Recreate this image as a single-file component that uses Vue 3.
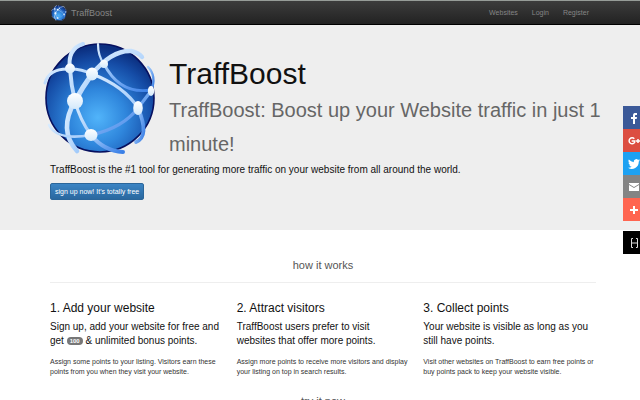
<template>
  <div class="page">
    <nav class="navbar">
      <a class="brand" href="#">
        <svg class="brand-logo" viewBox="8 10 114 116" aria-hidden="true">
          <use href="#globe" />
        </svg>
        TraffBoost
      </a>
      <div class="nav-links">
        <a v-for="item in links" :key="item" href="#">{{ item }}</a>
      </div>
    </nav>

    <header class="hero">
      <div class="hero-top">
        <svg class="logo" viewBox="8 10 114 116" role="img" aria-label="TraffBoost logo">
          <defs>
            <radialGradient id="ball" cx="48%" cy="68%" r="65%">
              <stop offset="0" stop-color="#51b4fa" />
              <stop offset="0.4" stop-color="#2f86dc" />
              <stop offset="0.8" stop-color="#154ca6" />
              <stop offset="1" stop-color="#0b2f80" />
            </radialGradient>
            <linearGradient id="lineLight" x1="0" y1="0" x2="1" y2="1">
              <stop offset="0" stop-color="#d9ecff" />
              <stop offset="1" stop-color="#a3cbfa" />
            </linearGradient>
            <linearGradient id="lineBlue" x1="0" y1="0" x2="1" y2="1">
              <stop offset="0" stop-color="#a9d0fc" />
              <stop offset="1" stop-color="#3a7fe6" />
            </linearGradient>
            <linearGradient id="dot" x1="0" y1="0" x2="0" y2="1">
              <stop offset="0" stop-color="#ffffff" />
              <stop offset="1" stop-color="#d3e9fb" />
            </linearGradient>
          </defs>
          <g id="globe">
            <circle cx="64" cy="68" r="54" fill="url(#ball)" stroke="#06105f" stroke-width="1.6" />
            <g fill="none" stroke="url(#lineLight)" stroke-linecap="round">
              <path d="M47 14Q31 19 34 39Q35 55 39 71" stroke-width="4" />
              <path d="M39 71Q22 100 41 121" stroke-width="4.6" />
              <path d="M39 71Q44 90 55 105" stroke-width="3" />
              <path d="M39 71Q46 58 56 44" stroke-width="5" />
              <path d="M9 53Q13 38 34 39Q46 39 56 44" stroke-width="3" />
              <path d="M56 44Q76 20 95 21Q103 23 106 27" stroke-width="4.4" />
              <path d="M62 14Q62 26 68 34" stroke-width="2.2" />
              <path d="M13 95Q21 111 55 105" stroke-width="2.6" />
              <path d="M56 44Q88 56 102 78" stroke-width="3.4" />
            </g>
            <g fill="none" stroke="url(#lineBlue)" stroke-linecap="round">
              <path d="M68 34Q84 65 115 60" stroke-width="2.8" />
              <path d="M55 105Q87 98 102 78L115 61" stroke-width="3.2" />
              <path d="M115 61Q121 46 112 37" stroke-width="2.4" />
              <path d="M102 78Q114 106 100 112" stroke-width="3.8" />
              <path d="M55 105Q68 121 87 122" stroke-width="4" />
            </g>
            <g fill="url(#dot)">
              <circle cx="39" cy="71" r="8" />
              <ellipse cx="56" cy="44" rx="6" ry="6.4" />
              <circle cx="34" cy="38.5" r="5" />
              <circle cx="68" cy="34" r="4" />
              <ellipse cx="102" cy="78" rx="4.8" ry="7" />
              <ellipse cx="55" cy="105" rx="6.5" ry="6" />
              <ellipse cx="115" cy="61" rx="3.2" ry="5" />
            </g>
          </g>
        </svg>
        <div class="hero-title">
          <h1>TraffBoost</h1>
          <h2>TraffBoost: Boost up your Website traffic in just 1 minute!</h2>
        </div>
      </div>
      <p class="tagline">TraffBoost is the #1 tool for generating more traffic on your website from all around the world.</p>
      <button class="signup" type="button">sign up now! It's totally free</button>
    </header>

    <main class="content">
      <h3 class="section-title">how it works</h3>
      <div class="steps">
        <section v-for="step in steps" :key="step.title">
          <h4>{{ step.title }}</h4>
          <p class="lead">
            {{ step.lead }}
            <template v-if="step.badge"><span class="badge">{{ step.badge }}</span> {{ step.rest }}</template>
          </p>
          <p class="note">{{ step.note }}</p>
        </section>
      </div>
      <h3 class="section-title next">try it now</h3>
    </main>

    <aside class="share">
      <button class="facebook" type="button" aria-label="Facebook">
        <svg viewBox="0 0 12 12"><path d="M5 12V7H3V5h2V3.5C5 1.600 6 1 7.500 1H9v2H8c-.8 0-1 .3-1 1v1h2l-.3 2H7v5z" /></svg>
      </button>
      <button class="google" type="button" aria-label="Google Plus">
        <svg viewBox="0 0 12 12"><path d="M6.300 3.700A3 3 0 1 0 6.500 7.600L6.800 6H3.700M8 6h4M10 4v4" fill="none" stroke="#fff" stroke-width="1.5" /></svg>
      </button>
      <button class="twitter" type="button" aria-label="Twitter">
        <svg viewBox="0 0 24 24"><path d="M24 4.6a10 10 0 0 1-2.8.8 5 5 0 0 0 2.1-2.7 10 10 0 0 1-3.1 1.2 4.9 4.9 0 0 0-8.4 4.5A14 14 0 0 1 1.7 3.2a4.9 4.9 0 0 0 1.5 6.5 5 5 0 0 1-2.2-.6c0 2.3 1.6 4.4 3.9 4.9a5 5 0 0 1-2.2.1 4.9 4.9 0 0 0 4.6 3.4A10 10 0 0 1 0 19.5 14 14 0 0 0 21.5 7.1 10 10 0 0 0 24 4.6z" /></svg>
      </button>
      <button class="mail" type="button" aria-label="Email">
        <svg viewBox="0 0 12 12"><path d="M1 2h10v1L6 6 1 3zM1 4l5 3 5-3v6H1z" /></svg>
      </button>
      <button class="more" type="button" aria-label="More">
        <svg viewBox="0 0 12 12"><path d="M5 2h2v3h3v2H7v3H5V7H2V5h3z" /></svg>
      </button>
      <button class="hide" type="button" aria-label="Hide">
        <svg viewBox="0 0 12 12"><path d="M5 1.5H3.500v9H5M8 1.500h1.500v9H8M4 6h5" fill="none" stroke="#ddd" /></svg>
      </button>
    </aside>
  </div>
</template>

<script setup>
const links = ['Websites', 'Login', 'Register']

const steps = [
  {
    title: '1. Add your website',
    lead: 'Sign up, add your website for free and get',
    badge: 100,
    rest: '& unlimited bonus points.',
    note: 'Assign some points to your listing. Visitors earn these points from you when they visit your website.',
  },
  {
    title: '2. Attract visitors',
    lead: 'TraffBoost users prefer to visit websites that offer more points.',
    note: 'Assign more points to receive more visitors and display your listing on top in search results.',
  },
  {
    title: '3. Collect points',
    lead: 'Your website is visible as long as you still have points.',
    note: 'Visit other websites on TraffBoost to earn free points or buy points pack to keep your website visible.',
  },
]
</script>

<style>
body {
  margin: 0;
  background: #fff;
}
</style>

<style scoped>
.page {
  font-family: "Liberation Sans", Arial, sans-serif;
  color: #111;
}

h1, h2, h3, h4, p {
  margin: 0;
  font-weight: normal;
}

.navbar {
  display: flex;
  align-items: center;
  justify-content: space-between;
  box-sizing: border-box;
  height: 25px;
  padding: 0 51px;
  background: linear-gradient(#3c3c3c, #222);
  border-top: 1px solid #969c98;
  border-bottom: 1px solid #000;
}

.navbar a {
  color: #858585;
  text-decoration: none;
}

.brand {
  display: flex;
  align-items: center;
  gap: 4px;
  font-size: 9px;
}

.brand-logo {
  width: 16px;
  height: 16px;
}

.nav-links {
  display: flex;
  gap: 14px;
  font-size: 7px;
}

.hero {
  padding: 15px 44px 30px 50px;
  background: #eee;
}

.hero-top {
  display: flex;
  gap: 11px;
}

.logo {
  flex: none;
  width: 114px;
  height: 116px;
  margin-left: -6px;
  overflow: visible;
}

.hero-title {
  margin-right: -12px;
  padding-top: 16px;
}

h1 {
  margin-bottom: 1px;
  font-size: 30px;
  line-height: 36px;
}

h2 {
  font-size: 20px;
  line-height: 34px;
  color: #666;
}

.tagline {
  margin-top: 2px;
  font-size: 10px;
  line-height: 14px;
}

.signup {
  display: block;
  height: 17px;
  margin-top: 6px;
  padding: 0 4px;
  font-family: inherit;
  font-size: 7px;
  color: #fff;
  background: linear-gradient(#3b84c4, #2a689f);
  border: 1px solid #2b669a;
  border-radius: 2px;
}

.content {
  padding: 26px 44px 0 50px;
}

.section-title {
  padding-bottom: 8px;
  font-size: 11px;
  line-height: 18px;
  text-align: center;
  color: #555;
  border-bottom: 1px solid #eee;
}

.steps {
  display: grid;
  grid-template-columns: repeat(3, 1fr);
  gap: 14px;
  margin-top: 18px;
}

h4 {
  font-size: 12px;
  line-height: 14px;
}

.lead {
  margin-top: 5px;
  font-size: 10px;
  line-height: 14px;
}

.badge {
  display: inline-block;
  padding: 0 3px;
  font-size: 6px;
  font-weight: bold;
  line-height: 8px;
  vertical-align: middle;
  color: #fff;
  background: #777;
  border-radius: 4px;
}

.note {
  margin-top: 9px;
  font-size: 7px;
  line-height: 10px;
  color: #333;
}

.section-title.next {
  margin-top: 15px;
}

.share {
  position: fixed;
  top: 106px;
  right: 0;
  width: 17px;
}

.share button {
  display: flex;
  align-items: center;
  width: 100%;
  height: 23px;
  padding: 0 0 0 5px;
  border: 0;
}

.share svg {
  flex: none;
  width: 12px;
  height: 12px;
  fill: #fff;
}

.facebook { background: #3b5998; }
.google { background: #dc4e41; }
.twitter { background: #1da1f2; }
.mail { background: #848484; }
.more { background: #ff6550; }

.share .hide {
  margin-top: 10px;
  background: #000;
}
</style>
